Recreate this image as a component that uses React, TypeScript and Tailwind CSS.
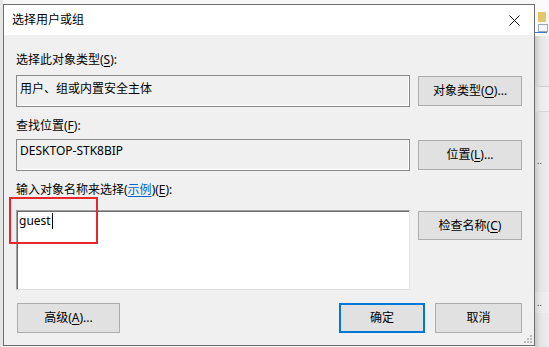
import React from "react";

const FONT = '"Segoe UI", "Noto Sans", "Noto Sans CJK SC", sans-serif';

function Btn({ children, className = "" }: { children: React.ReactNode; className?: string }) {
  return (
    <div
      className={`flex items-center justify-center bg-[#e1e1e1] text-[12px] leading-[16px] text-black ${className}`}
    >
      {children}
    </div>
  );
}

function U({ children }: { children: React.ReactNode }) {
  return <span className="underline underline-offset-2">{children}</span>;
}

export default function App() {
  return (
    <div
      className="relative flex h-[347px] w-[549px] overflow-hidden bg-[#f3f3f3]"
      style={{ fontFamily: FONT }}
    >
      {/* left gutter */}
      <div className="w-[3px] shrink-0 bg-[#e6e6e6]" />

      {/* dialog column */}
      <div className="flex shrink-0 flex-col">
        <div className="h-[4px] bg-[#f7f7f7]" />
        <div className="flex h-[342px] w-[532px] flex-col border border-[#6e6e6e] bg-[#f0f0f0]">
          {/* title bar */}
          <div className="flex h-[30px] items-center justify-between bg-white pl-[8px] pr-[10px]">
            <span className="text-[12px] leading-[16px] text-black">选择用户或组</span>
            <svg width="11" height="11" viewBox="0 0 11 11" className="mr-[4px]">
              <path d="M0.5 0.5 L10.5 10.5 M10.5 0.5 L0.5 10.5" stroke="#111" strokeWidth="1" fill="none" />
            </svg>
          </div>

          {/* content */}
          <div className="relative flex flex-1 flex-col px-[12px] pt-[17px] text-[12px] leading-[16px] text-black">
            <div>
              选择此对象类型(<U>S</U>):
            </div>
            <div className="mt-[7px] flex items-start gap-[8px]">
              <div className="h-[32px] w-[394px] border border-[#8a8a8a] px-[3px] pt-[5px] shadow-[inset_-1px_-1px_0_#ffffff]">
                用户、组或内置安全主体
              </div>
              <Btn className="mt-[1px] h-[30px] w-[104px] border border-[#adadad]">
                对象类型(<U>O</U>)...
              </Btn>
            </div>

            <div className="mt-[11px]">
              查找位置(<U>F</U>):
            </div>
            <div className="mt-[5px] flex items-start gap-[8px]">
              <div className="h-[32px] w-[394px] border border-[#8a8a8a] px-[3px] pt-[3px] shadow-[inset_-1px_-1px_0_#ffffff]">
                DESKTOP-STK8BIP
              </div>
              <Btn className="mt-[1px] h-[30px] w-[104px] border border-[#adadad]">
                位置(<U>L</U>)...
              </Btn>
            </div>

            <div className="mt-[11px]">
              输入对象名称来选择(
              <span className="text-[#0066cc] underline underline-offset-2">示例</span>)(<U>E</U>):
            </div>
            <div className="mt-[12px] flex items-start gap-[8px]">
              <div className="flex h-[80px] w-[394px] items-start border border-b-[#e3e3e3] border-l-[#a0a0a0] border-r-[#e3e3e3] border-t-[#a0a0a0] bg-white pl-[2px] pt-[2px] shadow-[inset_1px_1px_0_#6d6d6d]">
                <span className="text-[12px] leading-[16px]">guest</span>
                <span className="ml-[1px] mt-[0px] inline-block h-[16px] w-px bg-black" />
              </div>
              <Btn className="mt-[1px] h-[29px] w-[104px] border border-[#adadad]">
                检查名称(<U>C</U>)
              </Btn>
            </div>

            <div className="mt-[13px] flex items-start">
              <Btn className="ml-[1px] h-[30px] w-[103px] border border-[#adadad]">
                高级(<U>A</U>)...
              </Btn>
              <div className="flex-1" />
              <Btn className="h-[30px] w-[86px] border-2 border-[#0078d7]">确定</Btn>
              <Btn className="ml-[10px] h-[30px] w-[87px] border border-[#adadad]">取消</Btn>
            </div>

            {/* size grip */}
            <svg width="9" height="9" viewBox="0 0 9 9" className="absolute bottom-[1px] right-[1px]">
              <rect x="6" y="0" width="2" height="2" fill="#bdbdbd" />
              <rect x="3" y="3" width="2" height="2" fill="#bdbdbd" />
              <rect x="6" y="3" width="2" height="2" fill="#bdbdbd" />
              <rect x="0" y="6" width="2" height="2" fill="#bdbdbd" />
              <rect x="3" y="6" width="2" height="2" fill="#bdbdbd" />
              <rect x="6" y="6" width="2" height="2" fill="#bdbdbd" />
            </svg>
          </div>
        </div>
      </div>

      {/* background window strip on the right */}
      <div className="flex flex-1 flex-col">
        <div className="relative h-[36px] bg-[#fbfbfb]">
          <div className="absolute left-[3px] top-[12px] h-[10px] w-[8px] bg-[#e8c56a]" />
          <div className="absolute left-[3px] top-[24px] h-[8px] w-[10px] border border-[#9aa7b8] bg-[#f4f6f8]" />
          <div className="absolute left-[0px] top-[32px] h-px w-[12px] bg-[#3d7bd0]" />
        </div>
        <div className="h-[50px] bg-[linear-gradient(to_right,#c9c9c9,#e6e6e6_40%,#ececec)]" />
        <div className="h-px bg-[#cfcfcf]" />
        <div className="h-[24px] bg-[linear-gradient(to_right,#d0d0d0,#ececec_40%,#f1f1f1)]" />
        <div className="h-px bg-[#d5d5d5]" />
        <div className="relative h-[180px] bg-[linear-gradient(to_right,#c9c9c9,#e6e6e6_40%,#ececec)]">
          <div className="absolute left-[2px] top-[44px] text-[9px] leading-[9px] text-[#333]">..</div>
        </div>
        <div className="relative h-[21px] bg-[linear-gradient(to_right,#d2d2d2,#eaeaea_40%,#f0f0f0)]">
          <div className="absolute left-[2px] top-[6px] text-[9px] leading-[9px] text-[#333]">..</div>
        </div>
        <div className="flex-1 bg-[linear-gradient(to_right,#c9c9c9,#e6e6e6_40%,#ececec)]" />
      </div>

      {/* red annotation rectangle */}
      <div className="pointer-events-none absolute left-[9px] top-[197px] h-[47px] w-[89px] border-2 border-[#e8262b]" />
    </div>
  );
}
